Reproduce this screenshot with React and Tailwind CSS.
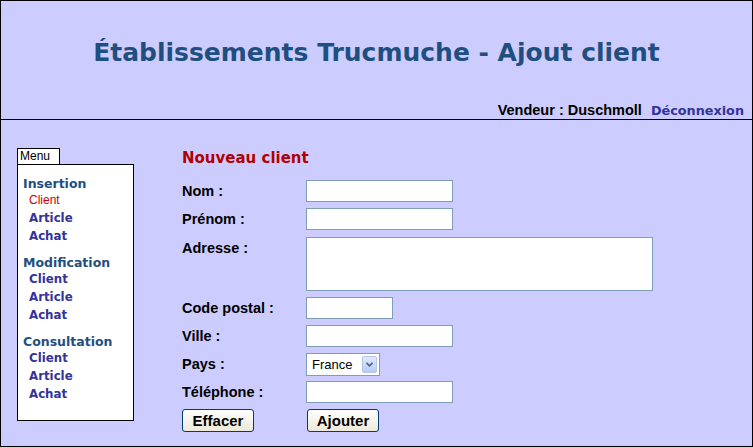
import React from "react";

const verdana = { fontFamily: '"DejaVu Sans", Verdana, sans-serif' };

const MenuGroup = ({ title, links, active }) => (
  <div className="mb-[8px]">
    <div className="text-[12.5px] font-bold leading-[17px] text-[#1f4f80]">{title}</div>
    <ul className="pl-[6px]">
      {links.map((l) =>
        l === active ? (
          <li
            key={l}
            className="h-[18px] leading-[16px] text-[12px] text-[#cc0000] font-['Liberation_Sans',Arial,sans-serif]"
          >
            {l}
          </li>
        ) : (
          <li key={l} className="h-[18px] leading-[16px] text-[11.8px] font-bold text-[#333399]">
            {l}
          </li>
        )
      )}
    </ul>
  </div>
);

const Field = ({ label, w, h = 22, mt }) => (
  <div className={`flex items-start ${mt}`}>
    <label className="w-[124px] pt-[1px] text-[14.5px] leading-[20px] font-bold text-black">{label}</label>
    <div
      className="border border-[#7f9db9] bg-white"
      style={{ width: w, height: h }}
    />
  </div>
);

const Button = ({ children }) => (
  <button className="h-[23px] w-[72px] rounded-[3px] border border-[#003c74] bg-gradient-to-b from-white to-[#ece9d8] text-[15px] font-bold leading-none text-black">
    {children}
  </button>
);

export default function App() {
  return (
    <div className="w-[753px] h-[448px] overflow-hidden bg-[#ccccff] font-['Liberation_Sans',Arial,sans-serif]">
      <div className="w-[753px] h-[447px] border border-black">
        {/* Header */}
        <div className="h-[119px] border-b border-black flex flex-col">
          <h1
            style={verdana}
            className="pt-[34px] text-center text-[25px] font-bold leading-[36px] text-[#1f4f80]"
          >
            Établissements Trucmuche - Ajout client
          </h1>
          <div className="mt-auto mb-[-3px] pr-[8px] flex justify-end items-baseline gap-[9px]">
            <span className="text-[14.5px] font-bold text-black">Vendeur : Duschmoll</span>
            <span style={verdana} className="text-[12.8px] font-bold text-[#333399]">
              Déconnexion
            </span>
          </div>
        </div>

        {/* Body */}
        <div className="flex pt-[28px]">
          {/* Menu */}
          <div className="ml-[16px] w-[117px]">
            <div className="w-[43px] h-[16px] border border-b-0 border-black bg-white pl-[2px] text-[12px] leading-[15px]">
              Menu
            </div>
            <div style={verdana} className="h-[257px] border border-black bg-white pl-[5px] pt-[10px]">
              <MenuGroup title="Insertion" links={["Client", "Article", "Achat"]} active="Client" />
              <MenuGroup title="Modification" links={["Client", "Article", "Achat"]} />
              <MenuGroup title="Consultation" links={["Client", "Article", "Achat"]} />
            </div>
          </div>

          {/* Form */}
          <div className="ml-[48px] flex flex-col">
            <h2 style={verdana} className="h-[20px] text-[15px] font-bold leading-[20px] text-[#b30000]">
              Nouveau client
            </h2>
            <Field label="Nom :" w={147} mt="mt-[12px]" />
            <Field label="Prénom :" w={147} mt="mt-[6px]" />
            <Field label="Adresse :" w={347} h={54} mt="mt-[7px]" />
            <Field label="Code postal :" w={87} mt="mt-[6px]" />
            <Field label="Ville :" w={147} mt="mt-[6px]" />
            <div className="flex items-start mt-[6px]">
              <label className="w-[124px] pt-[1px] text-[14.5px] leading-[20px] font-bold text-black">Pays :</label>
              <div className="w-[74px] h-[23px] border border-[#7f9db9] bg-white flex items-center justify-between pl-[5px] pr-[2px]">
                <span className="text-[13px] text-black">France</span>
                <span className="w-[15px] h-[17px] rounded-[2px] border border-[#b3c6f0] bg-gradient-to-b from-[#e2ebfd] to-[#b7caf5] flex items-center justify-center">
                  <svg width="7" height="5" viewBox="0 0 7 5">
                    <path d="M0.5 0.8 L3.5 3.8 L6.5 0.8" fill="none" stroke="#4d6185" strokeWidth="1.6" />
                  </svg>
                </span>
              </div>
            </div>
            <Field label="Téléphone :" w={147} mt="mt-[5px]" />
            <div className="flex mt-[6px]">
              <div className="w-[125px]">
                <Button>Effacer</Button>
              </div>
              <Button>Ajouter</Button>
            </div>
          </div>
        </div>
      </div>
    </div>
  );
}
